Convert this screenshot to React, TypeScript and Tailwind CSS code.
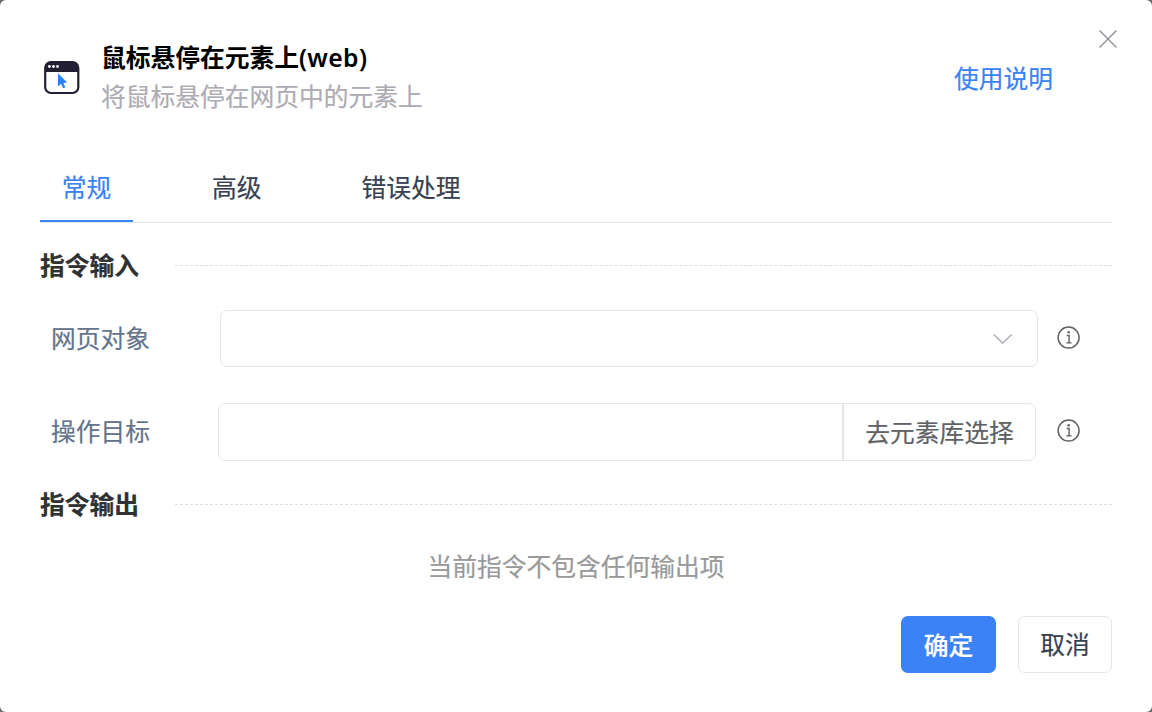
import type { ReactNode } from 'react';

function BrowserIcon() {
  return (
    <svg width="36" height="34" viewBox="0 0 36 34" fill="none">
      <rect x="1.200" y="1.200" width="33.100" height="30.800" rx="5.800" fill="#fff" stroke="#231f32" strokeWidth="2.200" />
      <path d="M1 11V7a6 6 0 0 1 6-6h21.500a6 6 0 0 1 6 6v4z" fill="#231f32" />
      <circle cx="5.400" cy="5.500" r="1.400" fill="#fff" />
      <circle cx="9.500" cy="5.500" r="1.400" fill="#fff" />
      <circle cx="13.500" cy="5.500" r="1.400" fill="#fff" />
      <path d="M14 12.300v13.200l3-2.700 2.200 4.500 2.200-1.100-2.100-4.300 3.800-.3z" fill="#2680ff" />
    </svg>
  );
}

function CloseIcon() {
  return (
    <svg width="18" height="18" viewBox="0 0 18 18" fill="none" stroke="#909399" strokeWidth="1.400">
      <path d="M.6.600l16.800 16.800M17.400.600L.6 17.400" />
    </svg>
  );
}

function ChevronIcon() {
  return (
    <svg width="20" height="12" viewBox="0 0 20 12" fill="none" stroke="#a8abb2" strokeWidth="1.400">
      <path d="M.7 1.500l9 8.500 9-8.500" />
    </svg>
  );
}

function InfoIcon() {
  return (
    <svg width="24" height="24" viewBox="0 0 24 24" fill="none" stroke="#606266" strokeWidth="1.500">
      <circle cx="11.600" cy="11.600" r="10.500" />
      <path d="M9.700 9.500h2.400v7.300M9.300 16.900h5.300" strokeWidth="1.400" />
      <circle cx="11.700" cy="6.200" r="1.300" fill="#606266" stroke="none" />
    </svg>
  );
}

function SectionTitle({ children }: { children: ReactNode }) {
  return (
    <div className="flex h-[36px] items-center">
      <h2 className="w-[135px] pt-[2px] font-bold text-[#303133]">{children}</h2>
      <div className="flex-1 border-t border-dashed border-[#dcdfe6]" />
    </div>
  );
}

export default function App() {
  return (
    <div className="h-[712px] w-[1152px] bg-[#6b6b6e]">
      <main className="relative flex h-full flex-col overflow-hidden rounded-[6px] bg-white px-10 pt-10 text-[24.75px] leading-[36px] whitespace-nowrap font-['Noto_Sans','Noto_Sans_CJK_SC',sans-serif] [-webkit-text-stroke:0.2px]">
        <button className="absolute top-[30px] right-[35px]" aria-label="关闭">
          <CloseIcon />
        </button>
        <header className="flex h-[76px] items-center pr-[59px] pl-[4px]">
          <BrowserIcon />
          <div className="ml-[21px] flex-1">
            <h1 className="h-[38px] font-bold text-black [-webkit-text-stroke:0px]">鼠标悬停在元素上<span className="font-semibold tracking-[0.35px]">(web)</span></h1>
            <p className="h-[38px] pt-px text-[#adabb3]">将鼠标悬停在网页中的元素上</p>
          </div>
          <a className="pt-[2px] text-[#3b82f6]">使用说明</a>
        </header>

        <nav className="mt-[36px] flex h-[71px] border-b border-[#e5e7eb] pt-[18px] text-[#374151]">
          <button className="flex h-[52px] w-[93px] justify-center border-b-2 border-[#3b82f6] text-[#3b82f6]">常规</button>
          <button className="ml-[79px] h-[36px]">高级</button>
          <button className="ml-[100px] h-[36px]">错误处理</button>
        </nav>

        <section className="mt-[24px]">
          <SectionTitle>指令输入</SectionTitle>
          <div className="mt-[27px] flex h-[57px] items-center pl-[11px]">
            <label className="w-[169px] text-[#64748b]">网页对象</label>
            <div className="flex h-[57px] w-[818px] items-center justify-end rounded-[7px] border border-[#e4e6eb] pr-[24px]">
              <ChevronIcon />
            </div>
            <span className="mb-px ml-[19px]"><InfoIcon /></span>
          </div>
          <div className="mt-[36px] flex h-[58px] items-center pl-[11px]">
            <label className="w-[167px] text-[#64748b]">操作目标</label>
            <div className="flex h-[58px] w-[818px] rounded-[7px] border border-[#e4e6eb]">
              <div className="flex-1" />
              <button className="w-[193px] border-l-2 border-[#e4e6eb] pt-px text-[#606266]">去元素库选择</button>
            </div>
            <span className="mb-[2px] ml-[21px]"><InfoIcon /></span>
          </div>
        </section>

        <section className="mt-[25px]">
          <SectionTitle>指令输出</SectionTitle>
          <p className="mt-[27px] text-center text-[#999999]">当前指令不包含任何输出项</p>
        </section>

        <footer className="mt-[31px] flex justify-end gap-[22px]">
          <button className="h-[57px] w-[95px] rounded-[7px] bg-[#3b82f6] pt-[2px] font-medium text-white">确定</button>
          <button className="h-[57px] w-[94px] rounded-[7px] border border-[#e4e6eb] pt-px text-[#374151]">取消</button>
        </footer>
      </main>
    </div>
  );
}
